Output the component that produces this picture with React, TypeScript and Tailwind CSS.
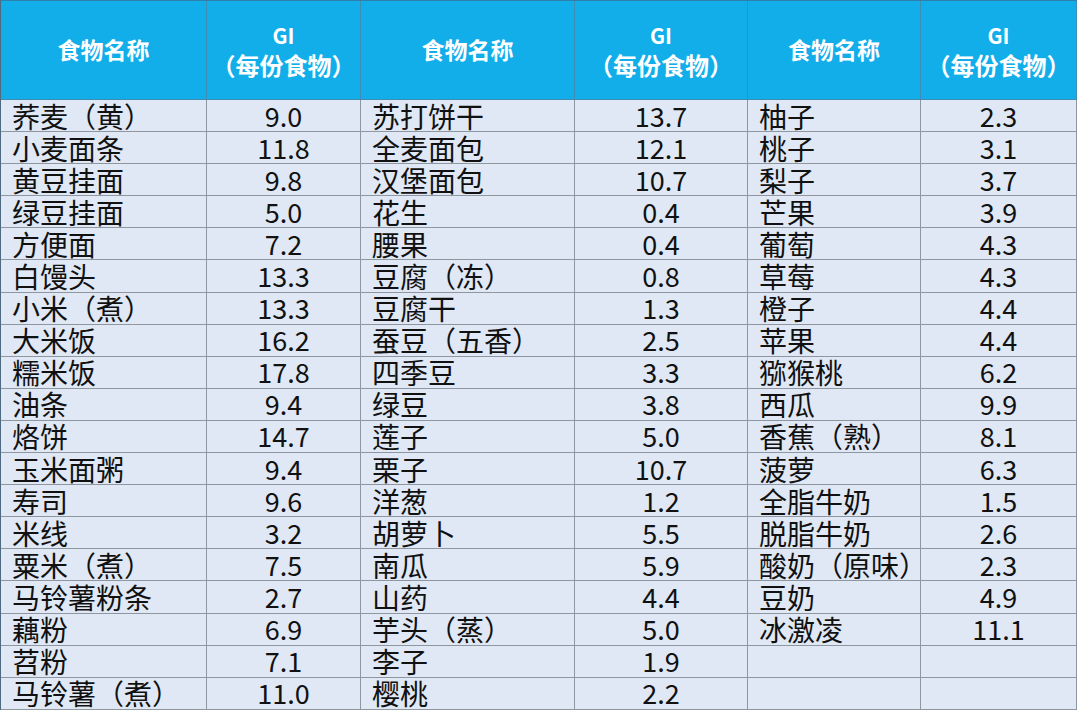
import React from "react";

const c1: [string, string][] = [
  ["荞麦（黄）", "9.0"], ["小麦面条", "11.8"], ["黄豆挂面", "9.8"], ["绿豆挂面", "5.0"], ["方便面", "7.2"],
  ["白馒头", "13.3"], ["小米（煮）", "13.3"], ["大米饭", "16.2"], ["糯米饭", "17.8"], ["油条", "9.4"],
  ["烙饼", "14.7"], ["玉米面粥", "9.4"], ["寿司", "9.6"], ["米线", "3.2"], ["粟米（煮）", "7.5"],
  ["马铃薯粉条", "2.7"], ["藕粉", "6.9"], ["苕粉", "7.1"], ["马铃薯（煮）", "11.0"],
];
const c2: [string, string][] = [
  ["苏打饼干", "13.7"], ["全麦面包", "12.1"], ["汉堡面包", "10.7"], ["花生", "0.4"], ["腰果", "0.4"],
  ["豆腐（冻）", "0.8"], ["豆腐干", "1.3"], ["蚕豆（五香）", "2.5"], ["四季豆", "3.3"], ["绿豆", "3.8"],
  ["莲子", "5.0"], ["栗子", "10.7"], ["洋葱", "1.2"], ["胡萝卜", "5.5"], ["南瓜", "5.9"],
  ["山药", "4.4"], ["芋头（蒸）", "5.0"], ["李子", "1.9"], ["樱桃", "2.2"],
];
const c3: [string, string][] = [
  ["柚子", "2.3"], ["桃子", "3.1"], ["梨子", "3.7"], ["芒果", "3.9"], ["葡萄", "4.3"],
  ["草莓", "4.3"], ["橙子", "4.4"], ["苹果", "4.4"], ["猕猴桃", "6.2"], ["西瓜", "9.9"],
  ["香蕉（熟）", "8.1"], ["菠萝", "6.3"], ["全脂牛奶", "1.5"], ["脱脂牛奶", "2.6"], ["酸奶（原味）", "2.3"],
  ["豆奶", "4.9"], ["冰激凌", "11.1"], ["", ""], ["", ""],
];

function Header() {
  return (
    <>
      {[0, 1, 2].map((i) => (
        <React.Fragment key={i}>
          <div className="bg-[#12aeea] border-r border-b border-r-[#3f8db3] border-b-[#3f8db3] flex items-center justify-center text-white font-bold text-[23px] leading-none pb-[2px]">
            食物名称
          </div>
          <div className="bg-[#12aeea] border-r border-b border-r-[#3f8db3] border-b-[#3f8db3] flex flex-col items-center justify-center text-white font-bold leading-[30px]">
            <span className="text-[21px]">GI</span>
            <span className="text-[24px]">（每份食物）</span>
          </div>
        </React.Fragment>
      ))}
    </>
  );
}

export default function App() {
  const rows = c1.map((_, i) => [c1[i], c2[i], c3[i]]);
  return (
    <div className="w-[1080px] h-[727px] bg-white" style={{ fontFamily: '"Noto Sans CJK SC", "Noto Sans", sans-serif' }}>
      <div className="w-[1077px] border-l border-t border-l-[#4d6a80] border-t-[#2f7fa8]">
        <div className="grid grid-cols-[206px_154px_214px_173px_173px_156px] grid-rows-[99px_repeat(19,32.1px)]">
          <Header />
          {rows.map((r, i) => (
            <React.Fragment key={i}>
              {r.map(([n, v], j) => (
                <React.Fragment key={j}>
                  <div className="bg-[#dfe8f4] border-r border-b border-[#8e979f] flex items-center pl-[11px] text-[28px] leading-[28px] text-[#111] whitespace-nowrap overflow-visible">
                    {n}
                  </div>
                  <div className="bg-[#dfe8f4] border-r border-b border-[#8e979f] flex items-center justify-center text-[27px] leading-[28px] text-[#111]">
                    {v}
                  </div>
                </React.Fragment>
              ))}
            </React.Fragment>
          ))}
        </div>
      </div>
    </div>
  );
}
